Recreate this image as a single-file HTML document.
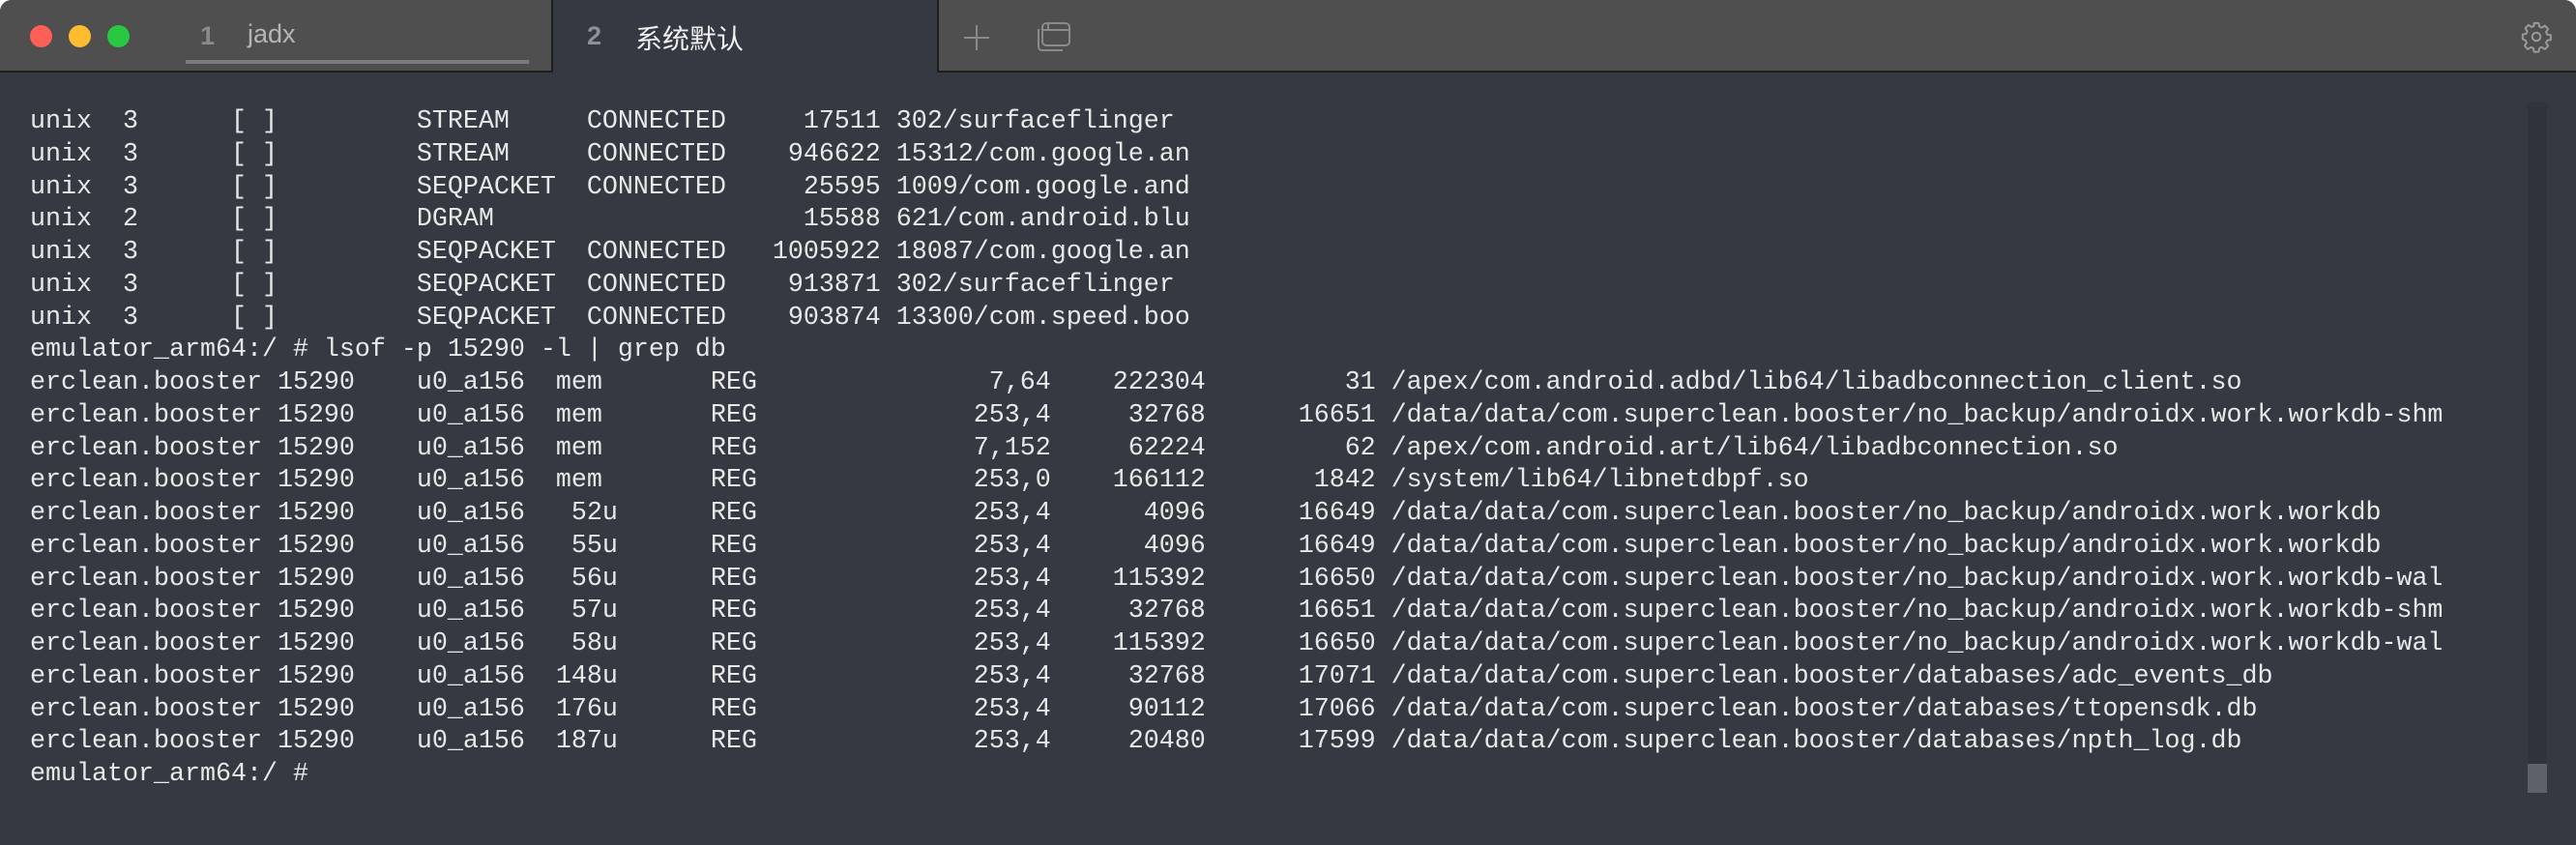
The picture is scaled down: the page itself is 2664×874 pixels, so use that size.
<!DOCTYPE html>
<html><head><meta charset="utf-8"><style>
html,body{margin:0;padding:0;background:#fff;}
body{width:2664px;height:874px;overflow:hidden;position:relative;}
#win{position:absolute;left:0;top:0;width:2664px;height:874px;background:#353a42;border-radius:12px 12px 0 0;overflow:hidden;}
#bar{position:absolute;left:0;top:0;width:2664px;height:73px;background:#4f4f4f;border-bottom:2px solid #1d1e20;}
.dot{position:absolute;top:26px;width:23px;height:23px;border-radius:50%;}
#tab2{position:absolute;left:570px;top:0;width:397px;height:75px;background:#353a42;border-left:2px solid #1d1e20;border-right:2px solid #1d1e20;}
.t{position:absolute;font-family:"Liberation Sans","Noto Sans CJK SC",sans-serif;font-size:27px;}
pre{position:absolute;left:31px;top:110px;margin:0;font-family:"Liberation Mono",monospace;font-size:26.67px;line-height:33.75px;color:#e8e8e8;}
</style></head><body><div id="win">
<div id="bar"></div>
<div class="dot" style="left:31px;background:#fe5f57;"></div>
<div class="dot" style="left:71px;background:#febc2e;"></div>
<div class="dot" style="left:111px;background:#28c840;"></div>
<div class="t" style="left:207px;top:22px;color:#8a8a8a;font-weight:bold;">1</div>
<div class="t" style="left:256px;top:20px;color:#b5b5b5;">jadx</div>
<div style="position:absolute;left:192px;top:62px;width:355px;height:4px;background:#7a7a7a;"></div>
<div id="tab2"></div>
<div class="t" style="left:607px;top:22px;color:#8d9096;font-weight:bold;">2</div>
<div class="t" style="left:657px;top:19px;color:#f0f0f0;font-size:28px;">系统默认</div>
<svg style="position:absolute;left:995px;top:24px" width="30" height="30"><path d="M15 2V28M2 15H28" stroke="#8a8a8a" stroke-width="2"/></svg>
<svg style="position:absolute;left:1072px;top:21px" width="38" height="34"><rect x="6" y="3" width="28" height="23" rx="4" fill="none" stroke="#8a8a8a" stroke-width="2"/><path d="M6 10H34M12 3V10M2 9V27Q2 31 6 31H27" fill="none" stroke="#8a8a8a" stroke-width="2"/></svg>
<svg style="position:absolute;left:2606px;top:20px" width="34" height="36" viewBox="0 0 24 24"><path d="M10.3 2h3.4l.5 2.6 1.8.8 2.2-1.5 2.4 2.4-1.5 2.2.8 1.8 2.6.5v3.4l-2.6.5-.8 1.8 1.5 2.2-2.4 2.4-2.2-1.5-1.8.8-.5 2.6h-3.4l-.5-2.6-1.8-.8-2.2 1.5-2.4-2.4 1.5-2.2-.8-1.8L2 13.7v-3.4l2.6-.5.8-1.8-1.5-2.2 2.4-2.4 2.2 1.5 1.8-.8z" fill="none" stroke="#9a9a9a" stroke-width="1.4" stroke-linejoin="round"/><circle cx="12" cy="12" r="3" fill="none" stroke="#9a9a9a" stroke-width="1.4"/></svg>
<div style="position:absolute;left:2614px;top:106px;width:20px;height:714px;background:#2f333a;"></div>
<div style="position:absolute;left:2614px;top:790px;width:20px;height:30px;background:#5e6268;"></div>
<pre>unix  3      [ ]         STREAM     CONNECTED     17511 302/surfaceflinger
unix  3      [ ]         STREAM     CONNECTED    946622 15312/com.google.an
unix  3      [ ]         SEQPACKET  CONNECTED     25595 1009/com.google.and
unix  2      [ ]         DGRAM                    15588 621/com.android.blu
unix  3      [ ]         SEQPACKET  CONNECTED   1005922 18087/com.google.an
unix  3      [ ]         SEQPACKET  CONNECTED    913871 302/surfaceflinger
unix  3      [ ]         SEQPACKET  CONNECTED    903874 13300/com.speed.boo
emulator_arm64:/ # lsof -p 15290 -l | grep db
erclean.booster 15290    u0_a156  mem       REG               7,64    222304         31 /apex/com.android.adbd/lib64/libadbconnection_client.so
erclean.booster 15290    u0_a156  mem       REG              253,4     32768      16651 /data/data/com.superclean.booster/no_backup/androidx.work.workdb-shm
erclean.booster 15290    u0_a156  mem       REG              7,152     62224         62 /apex/com.android.art/lib64/libadbconnection.so
erclean.booster 15290    u0_a156  mem       REG              253,0    166112       1842 /system/lib64/libnetdbpf.so
erclean.booster 15290    u0_a156   52u      REG              253,4      4096      16649 /data/data/com.superclean.booster/no_backup/androidx.work.workdb
erclean.booster 15290    u0_a156   55u      REG              253,4      4096      16649 /data/data/com.superclean.booster/no_backup/androidx.work.workdb
erclean.booster 15290    u0_a156   56u      REG              253,4    115392      16650 /data/data/com.superclean.booster/no_backup/androidx.work.workdb-wal
erclean.booster 15290    u0_a156   57u      REG              253,4     32768      16651 /data/data/com.superclean.booster/no_backup/androidx.work.workdb-shm
erclean.booster 15290    u0_a156   58u      REG              253,4    115392      16650 /data/data/com.superclean.booster/no_backup/androidx.work.workdb-wal
erclean.booster 15290    u0_a156  148u      REG              253,4     32768      17071 /data/data/com.superclean.booster/databases/adc_events_db
erclean.booster 15290    u0_a156  176u      REG              253,4     90112      17066 /data/data/com.superclean.booster/databases/ttopensdk.db
erclean.booster 15290    u0_a156  187u      REG              253,4     20480      17599 /data/data/com.superclean.booster/databases/npth_log.db
emulator_arm64:/ #</pre>
</div></body></html>
